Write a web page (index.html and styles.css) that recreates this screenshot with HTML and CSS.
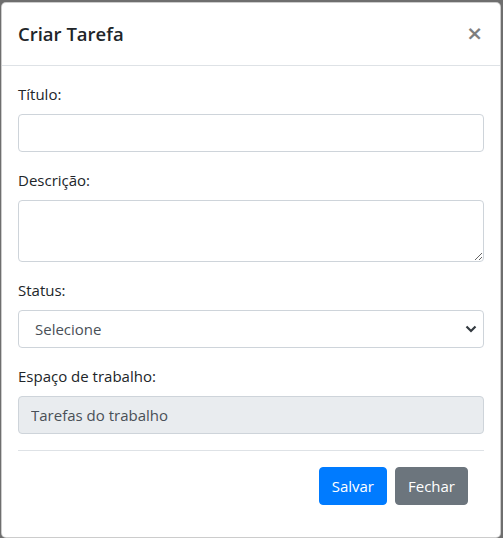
FILE: index.html
```html
<!DOCTYPE html>
<html lang="pt">
<head>
<meta charset="utf-8">
<link rel="stylesheet" href="styles.css">
</head>
<body>
<div class="modal">
  <div class="modal-header">
    <h5 class="modal-title">Criar Tarefa</h5>
    <button class="close" type="button">&times;</button>
  </div>
  <div class="modal-body">
    <div class="form-group">
      <label class="label">Título:</label>
      <input class="form-control" type="text">
    </div>
    <div class="form-group">
      <label class="label">Descrição:</label>
      <textarea class="form-control textarea" rows="2"></textarea>
    </div>
    <div class="form-group">
      <label class="label">Status:</label>
      <select class="form-control select"><option>Selecione</option></select>
    </div>
    <div class="form-group">
      <label class="label">Espaço de trabalho:</label>
      <input class="form-control disabled" type="text" value="Tarefas do trabalho" disabled>
    </div>
    <div class="modal-footer">
      <button class="btn btn-primary" type="button">Salvar</button>
      <button class="btn btn-secondary" type="button">Fechar</button>
    </div>
  </div>
</div>
</body>
</html>
```
FILE: styles.css
```css
html, body {
  margin: 0;
  padding: 0;
  background: #6e6e6e;
  height: 100%;
}
body {
  padding: 2px 1px 1px;
  box-sizing: border-box;
  font-family: "Open Sans", "Noto Sans", sans-serif;
  color: #212529;
  font-size: 15px;
  line-height: 1.5;
}
.modal {
  width: 500px;
  box-sizing: border-box;
  background: #fff;
  border: 1px solid rgba(0,0,0,.2);
  border-radius: 5px;
}
.modal-header {
  display: flex;
  align-items: flex-start;
  justify-content: space-between;
  padding: 16px;
  border-bottom: 1px solid #dee2e6;
}
.modal-title {
  margin: 0;
  font-size: 18.5px;
  font-weight: 600;
  line-height: 30px;
}
.close {
  background: none;
  border: 0;
  padding: 16px;
  margin: -12px -15px -16px auto;
  font-family: "DejaVu Sans", sans-serif;
  font-size: 20px;
  font-weight: 700;
  line-height: 1;
  color: #000;
  opacity: .5;
  text-shadow: 0 1px 0 #fff;
}
.modal-body {
  padding: 16px;
}
.form-group {
  margin-bottom: 16px;
}
.label {
  display: block;
  margin-bottom: 8px;
  line-height: 24px;
}
.form-control {
  display: block;
  width: 100%;
  box-sizing: border-box;
  height: 38px;
  padding: 6px 12px;
  font-family: inherit;
  font-size: 15px;
  line-height: 24px;
  color: #495057;
  background: #fff;
  border: 1px solid #ced4da;
  border-radius: 4px;
  margin: 0;
}
.textarea {
  height: 62px;
  resize: vertical;
}
.select {
  appearance: none;
  -webkit-appearance: none;
  padding-left: 16px;
  background: #fff url("data:image/svg+xml,%3Csvg xmlns='http://www.w3.org/2000/svg' width='12' height='8' viewBox='0 0 12 8'%3E%3Cpath d='M1.5 1.5l4.5 4.5 4.5-4.5' fill='none' stroke='%23343a40' stroke-width='2.2'/%3E%3C/svg%3E") no-repeat right 6px center;
}
.disabled {
  background: #e9ecef;
  opacity: 1;
}
.modal-footer {
  display: flex;
  justify-content: flex-end;
  align-items: center;
  padding: 12px;
  border-top: 1px solid #dee2e6;
}
.btn {
  margin: 4px;
  height: 38px;
  padding: 6px 12px;
  font-family: inherit;
  font-size: 15px;
  line-height: 24px;
  color: #fff;
  border: 1px solid transparent;
  border-radius: 4px;
}
.btn-primary {
  background: #007bff;
  border-color: #007bff;
}
.btn-secondary {
  background: #6c757d;
  border-color: #6c757d;
}
```
